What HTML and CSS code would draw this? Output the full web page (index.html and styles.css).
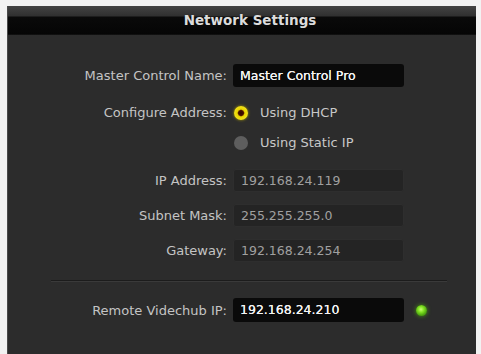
FILE: index.html
```html
<!DOCTYPE html>
<html lang="en">
<head>
<meta charset="UTF-8">
<meta name="viewport" content="width=device-width, initial-scale=1.0">
<title>Network Settings</title>
<link rel="stylesheet" href="styles.css">
</head>
<body>
    <div class="window">
        <div class="titlebar">Network Settings</div>
        <div class="content">
            <div class="row row-name">
                <label>Master Control Name:</label>
                <div class="field field-dark">Master Control Pro</div>
            </div>
            <div class="row row-radio first">
                <label>Configure Address:</label>
                <div class="option"><span class="radio on"></span>Using DHCP</div>
            </div>
            <div class="row row-radio">
                <label></label>
                <div class="option"><span class="radio"></span>Using Static IP</div>
            </div>
            <div class="ip-group">
                <div class="row">
                    <label>IP Address:</label>
                    <div class="field field-off">192.168.24.119</div>
                </div>
                <div class="row">
                    <label>Subnet Mask:</label>
                    <div class="field field-off">255.255.255.0</div>
                </div>
                <div class="row">
                    <label>Gateway:</label>
                    <div class="field field-off">192.168.24.254</div>
                </div>
            </div>
            <div class="divider"></div>
            <div class="row row-remote">
                <label>Remote Videchub IP:</label>
                <div class="field field-dark">192.168.24.210</div>
                <span class="led"></span>
            </div>
        </div>
    </div>
</body>
</html>
```

FILE: styles.css
```css
body {
    margin: 0;
    background-color: #f2f2f2;
    font-family: "DejaVu Sans", "Liberation Sans", sans-serif;
    font-size: 12.5px;
}
.window {
    margin: 6px 5px 0 7px;
    height: 348px;
    background-color: #2c2c2c;
    border-left: 1px solid #4a4a4a;
    box-sizing: border-box;
}
.titlebar {
    height: 29px;
    line-height: 28px;
    padding-left: 16px;
    text-align: center;
    font-weight: bold;
    font-size: 13.5px;
    color: #dcdcdc;
    background: linear-gradient(#434343 0, #303030 10px, #0a0a0a 11px, #050505 28px, #1a1a1a 29px);
}
.content {
    padding-top: 29px;
}
.row {
    display: grid;
    grid-template-columns: 219px 171px auto;
    column-gap: 6px;
    align-items: center;
    height: 23px;
}
.row label {
    text-align: right;
    font-size: 13px;
    color: #c4c4c4;
}
.field {
    height: 23px;
    line-height: 23px;
    padding-left: 7px;
    box-sizing: border-box;
    border-radius: 3px;
}
.field-dark {
    background-color: #0a0a0a;
    color: #f4f4f4;
    text-shadow: 0 0 0.4px #ffffff;
}
.field-off {
    background-color: #242424;
    border: 1px solid #2e2e2e;
    color: #a0a0a0;
    line-height: 21px;
}
.row-radio {
    margin-top: 7px;
}
.row-radio.first {
    margin-top: 14px;
}
.option {
    display: flex;
    align-items: center;
    font-size: 13px;
    color: #c8c8c8;
}
.radio {
    width: 14px;
    height: 14px;
    margin-left: 1px;
    margin-right: 12px;
    border-radius: 50%;
    background-color: #5e5e5e;
    box-sizing: border-box;
}
.radio.on {
    background: radial-gradient(circle, #2a0600 0, #4a0f00 2.5px, #e8d400 3.8px, #f2e21a 7px);
    box-shadow: 0 0 3px #b0a000;
}
.ip-group {
    margin-top: 15px;
    display: flex;
    flex-direction: column;
    gap: 12px;
}
.divider {
    margin: 18px 29px 0 43px;
    height: 1px;
    background-color: #1c1c1c;
    border-bottom: 1px solid #3a3a3a;
}
.row-remote {
    margin-top: 16px;
    height: 24px;
}
.row-remote .field {
    height: 24px;
    line-height: 24px;
}
.led {
    width: 11px;
    height: 11px;
    margin-left: 6px;
    border-radius: 50%;
    background: radial-gradient(circle at 45% 40%, #c8ff70 0, #7ee020 3px, #4aa010 6px);
    box-shadow: 0 0 4px #4a9a10;
}
```
